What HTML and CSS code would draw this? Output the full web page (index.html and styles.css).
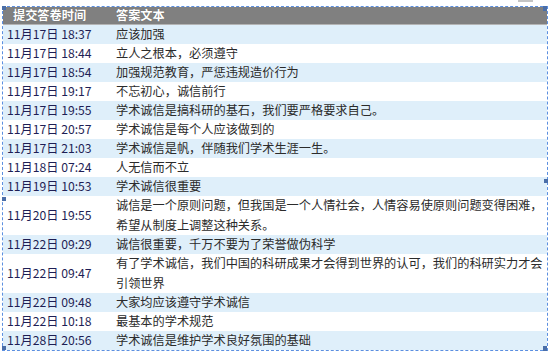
FILE: index.html
```html
<!DOCTYPE html>
<html lang="zh-CN">
<head>
<meta charset="utf-8">
<title>答案文本</title>
<link rel="stylesheet" href="styles.css">
</head>
<body>
<div class="topbar"></div>
<div class="frame">
  <table class="sheet">
    <colgroup><col class="c-time"><col class="c-text"></colgroup>
    <thead>
      <tr><th class="h-time">提交答卷时间</th><th class="h-text">答案文本</th></tr>
    </thead>
    <tbody>
      <tr><td class="t">11月17日 18:37</td><td>应该加强</td></tr>
      <tr><td class="t">11月17日 18:44</td><td>立人之根本，必须遵守</td></tr>
      <tr><td class="t">11月17日 18:54</td><td>加强规范教育，严惩违规造价行为</td></tr>
      <tr><td class="t">11月17日 19:17</td><td>不忘初心，诚信前行</td></tr>
      <tr><td class="t">11月17日 19:55</td><td>学术诚信是搞科研的基石，我们要严格要求自己。</td></tr>
      <tr><td class="t">11月17日 20:57</td><td>学术诚信是每个人应该做到的</td></tr>
      <tr><td class="t">11月17日 21:03</td><td>学术诚信是帆，伴随我们学术生涯一生。</td></tr>
      <tr><td class="t">11月18日 07:24</td><td>人无信而不立</td></tr>
      <tr><td class="t">11月19日 10:53</td><td>学术诚信很重要</td></tr>
      <tr class="dbl"><td class="t">11月20日 19:55</td><td>诚信是一个原则问题，但我国是一个人情社会，人情容易使原则问题变得困难，希望从制度上调整这种关系。</td></tr>
      <tr><td class="t">11月22日 09:29</td><td>诚信很重要，千万不要为了荣誉做伪科学</td></tr>
      <tr class="dbl"><td class="t">11月22日 09:47</td><td>有了学术诚信，我们中国的科研成果才会得到世界的认可，我们的科研实力才会引领世界</td></tr>
      <tr><td class="t">11月22日 09:48</td><td>大家均应该遵守学术诚信</td></tr>
      <tr><td class="t">11月22日 10:18</td><td>最基本的学术规范</td></tr>
      <tr><td class="t">11月28日 20:56</td><td>学术诚信是维护学术良好氛围的基础</td></tr>
    </tbody>
  </table>
  <span class="handle h-tl"></span>
  <span class="handle h-tr"></span>
  <span class="handle h-ml"></span>
  <span class="handle h-mr"></span>
  <span class="handle h-bl"></span>
  <span class="handle h-br"></span>
</div>
</body>
</html>
```
FILE: styles.css
```css
html, body {
  margin: 0;
  padding: 0;
  background: #ffffff;
}
body {
  width: 549px;
  height: 354px;
  overflow: hidden;
  font-family: "Noto Sans CJK SC", "Noto Sans", sans-serif;
  font-size: 12.2px;
  color: #2b2b2b;
}
.topbar {
  margin-left: 518px;
  width: 15px;
  height: 2px;
  background: #c4c4c4;
  margin-bottom: 4px;
}
.frame {
  position: relative;
  margin-left: 2px;
  width: 544px;
  border: 1px dashed #5b8fe0;
}
.sheet {
  border-collapse: collapse;
  border-spacing: 0;
  width: 544px;
  table-layout: fixed;
}
.c-time { width: 113px; }
.c-text { width: 431px; }
.sheet th {
  height: 17px;
  padding: 0;
  background: #808080;
  border-bottom: 1px solid #b4b4b4;
  color: #ffffff;
  font-weight: bold;
  text-align: left;
  line-height: 17px;
  text-shadow: 0 0 1px #555555;
  white-space: nowrap;
}
.h-time { padding-left: 10px !important; }
.sheet td {
  padding: 0;
  line-height: 19px;
  height: 19px;
  vertical-align: middle;
  white-space: normal;
}
.sheet td.t {
  padding-left: 4px;
  color: #1e1e55;
  white-space: nowrap;
}
.sheet tbody tr:nth-child(odd) td {
  background: #dfeffa;
}
.sheet tr.dbl td {
  line-height: 19.5px;
  height: 39px;
}
.handle {
  position: absolute;
  width: 4px;
  height: 4px;
  background: #4a6ea8;
}
.h-tl { left: -1px; top: -1px; }
.h-tr { right: 0px; top: -1px; width: 4px; height: 5px; }
.h-ml { left: -1px; top: 190px; }
.h-mr { right: -1px; top: 172px; }
.h-bl { left: -1px; bottom: 0px; }
.h-br { right: 0px; bottom: -1px; width: 4px; height: 5px; }
```
